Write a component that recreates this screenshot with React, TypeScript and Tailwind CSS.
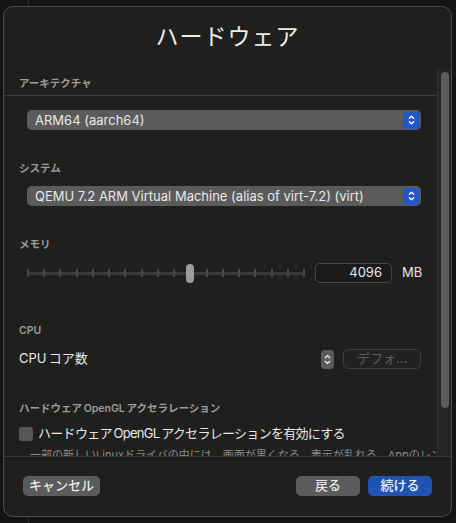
import React from 'react'

const font = "font-['Inter','Noto_Sans_CJK_JP',sans-serif]"

const Chevrons = ({ className = '' }: { className?: string }) => (
  <svg viewBox="0 0 10 14" className={className} fill="none" stroke="currentColor" strokeWidth="1.6" strokeLinecap="round" strokeLinejoin="round">
    <path d="M2.5 5 L5 2.5 L7.5 5" />
    <path d="M2.5 9 L5 11.5 L7.5 9" />
  </svg>
)

const SectionLabel = ({ children, className = '' }: { children: React.ReactNode; className?: string }) => (
  <div className={`pl-[15px] text-[10.5px] font-semibold leading-[14px] text-[#9c9c9c] ${className}`}>{children}</div>
)

const Popup = ({ label, className = '' }: { label: string; className?: string }) => (
  <div className={`ml-[23px] mr-[16px] flex h-[20px] items-center justify-between rounded-[5px] bg-[#5b5b5b] pl-[8px] pr-[1px] ${className}`}>
    <span className="text-[13px] leading-none text-[#e8e8e8]">{label}</span>
    <div className="flex h-[17px] w-[17px] items-center justify-center rounded-[4px] bg-[#2556c6] text-white">
      <Chevrons className="h-[12px] w-[9px]" />
    </div>
  </div>
)

const ticks = Array.from({ length: 18 })

const Slider = () => (
  <div className="relative flex h-[20px] w-[278px] items-center">
    <div className="flex h-[3px] w-full items-center justify-between bg-[#3a3a3a]">
      {ticks.map((_, i) => (
        <div key={i} className="h-[8px] w-[2px] bg-[#474747]" />
      ))}
    </div>
    <div className="absolute left-[159px] top-[1px] h-[19px] w-[8px] rounded-full bg-[#9b9b9b]" />
  </div>
)

export default function App() {
  return (
    <div className={`flex h-[523px] w-[456px] flex-col overflow-hidden bg-[#141414] ${font}`}>
      <div className="flex h-[6px] shrink-0">
        <div className="ml-[28px] w-px bg-[#2a2a2a]" />
      </div>
      <div className="ml-[3px] flex h-[511px] w-[449px] shrink-0 flex-col overflow-hidden rounded-[10px] border border-[#4b4b4b] bg-[#1f1f1d]">
        {/* title */}
        <div className="flex h-[62px] shrink-0 items-center justify-center pb-[1px]">
          <h1 className="text-[23px] font-normal tracking-[1px] text-[#ececec]">ハードウェア</h1>
        </div>

        {/* scroll view */}
        <div className="flex h-[388px] shrink-0 border-b border-[#363636]">
          <div className="flex-1 overflow-hidden">
            <div className="flex h-[27px] items-center border-b border-[#3a3a3a] pt-[3px]">
              <SectionLabel>アーキテクチャ</SectionLabel>
            </div>
            <Popup label="ARM64 (aarch64)" className="mt-[14px]" />

            <SectionLabel className="mt-[32px]">システム</SectionLabel>
            <Popup label="QEMU 7.2 ARM Virtual Machine (alias of virt-7.2) (virt)" className="mt-[10px]" />

            <SectionLabel className="mt-[32px]">メモリ</SectionLabel>
            <div className="ml-[23px] mt-[11px] flex h-[20px] items-center">
              <Slider />
              <div className="ml-[10px] flex h-[20px] w-[77px] items-center justify-end rounded-[5px] border border-[#474747] bg-[#1a1a1a] pr-[9px] text-[13px] text-[#e8e8e8]">
                4096
              </div>
              <span className="ml-[10px] text-[13px] text-[#e8e8e8]">MB</span>
            </div>

            <SectionLabel className="mt-[41px]">CPU</SectionLabel>
            <div className="ml-[15px] mr-[16px] mt-[11px] flex h-[20px] items-center">
              <span className="flex-1 text-[13px] text-[#e8e8e8]">CPU{'\u2009'}コア数</span>
              <div className="flex h-[19px] w-[13px] items-center justify-center rounded-[4px] bg-[#5b5b5b] text-[#e0e0e0]">
                <Chevrons className="h-[15px] w-[9px]" />
              </div>
              <div className="ml-[9px] flex h-[20px] w-[78px] items-center justify-center rounded-[5px] border border-[#3c3c3c] bg-[#222220] text-[13px] text-[#5f5f5f]">
                デフォ…
              </div>
            </div>

            <SectionLabel className="mt-[33px]">ハードウェア{'\u2009'}OpenGL{'\u2009'}アクセラレーション</SectionLabel>
            <div className="ml-[15px] mt-[10px] flex h-[16px] items-center">
              <div className="h-[14px] w-[14px] rounded-[3px] bg-[#555555]" />
              <span className="ml-[5px] text-[13px] tracking-[-0.7px] text-[#e8e8e8]">ハードウェア{'\u2009'}OpenGL{'\u2009'}アクセラレーションを有効にする</span>
            </div>
            <div className="ml-[26px] mt-[6px] whitespace-nowrap text-[11px] leading-[14px] text-[#8a8a8a]">
              一部の新しいLinuxドライバの中には、画面が黒くなる、表示が乱れる、Appのレンダリングに問題が起きる
            </div>
          </div>
          <div className="flex w-[14px] shrink-0 justify-center border-l border-[#333333] bg-[#252523] pt-[3px]">
            <div className="h-[336px] w-[8px] rounded-full bg-[#5c5c5c]" />
          </div>
        </div>

        {/* footer */}
        <div className="flex flex-1 items-center px-[19px] pb-[1px]">
          <button className="flex h-[20px] w-[77px] items-center justify-center rounded-[5px] bg-[#5b5b5b] text-[13px] font-medium text-[#e8e8e8]">
            キャンセル
          </button>
          <div className="flex-1" />
          <button className="flex h-[20px] w-[64px] items-center justify-center rounded-[5px] bg-[#5b5b5b] text-[13px] font-medium text-[#e8e8e8]">
            戻る
          </button>
          <button className="ml-[8px] flex h-[20px] w-[64px] items-center justify-center rounded-[5px] bg-[#2252b2] text-[13px] font-medium text-[#eef2ff]">
            続ける
          </button>
        </div>
      </div>
      <div className="flex flex-1">
        <div className="ml-[28px] w-px bg-[#2a2a2a]" />
      </div>
    </div>
  )
}
